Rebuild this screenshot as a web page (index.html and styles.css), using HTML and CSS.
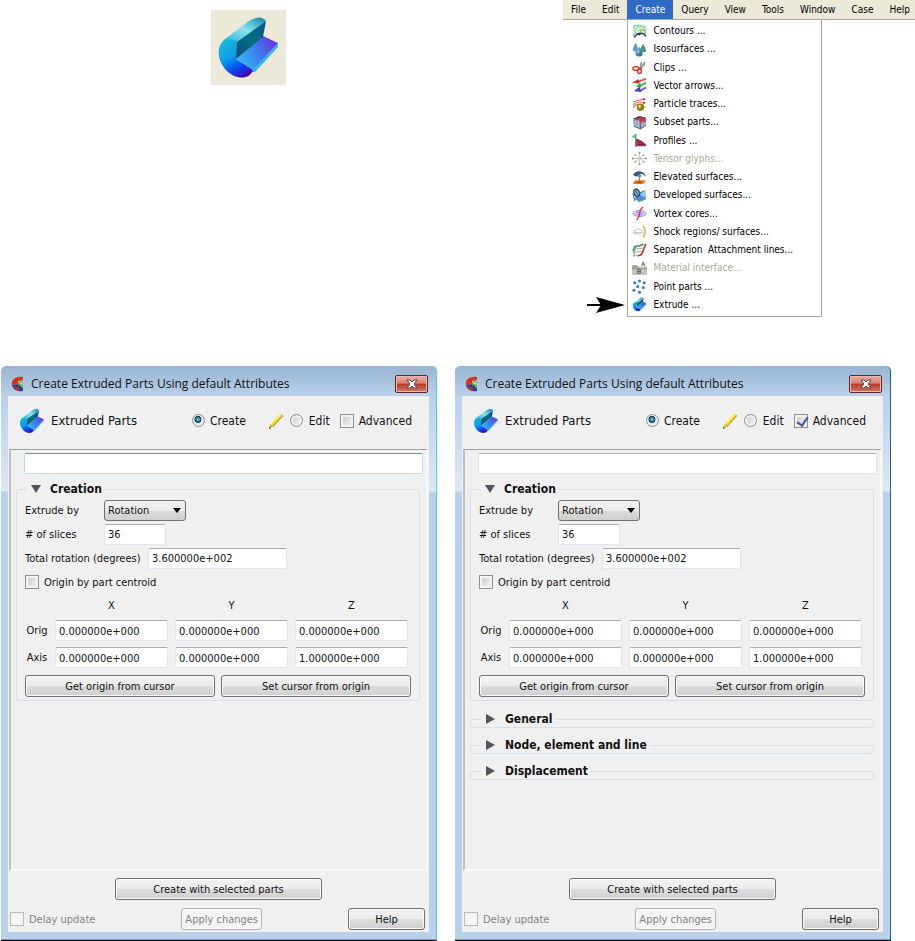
FILE: index.html
```html
<!DOCTYPE html>
<html lang="en">
<head>
  <meta charset="UTF-8">
  <title>Create Extruded Parts</title>
  <meta name="viewport" content="width=device-width, initial-scale=1.0">
  <link rel="stylesheet" href="styles.css">
</head>
<body>

  <!-- shared icons -->
  <svg class="defs" width="0" height="0" aria-hidden="true">
    <defs>
      <linearGradient id="ex-top" x1="0" y1="1" x2="1" y2="0">
        <stop offset="0" stop-color="#2cb4dc"/>
        <stop offset=".5" stop-color="#8ce4f2"/>
        <stop offset="1" stop-color="#0a86a8"/>
      </linearGradient>
      <linearGradient id="ex-wall" x1="0" y1="1" x2="1" y2="0">
        <stop offset="0" stop-color="#044a78"/>
        <stop offset=".5" stop-color="#067080"/>
        <stop offset="1" stop-color="#0a4a98"/>
      </linearGradient>
      <linearGradient id="ex-floor" x1="0" y1=".7" x2="1" y2=".3">
        <stop offset="0" stop-color="#34c0ec"/>
        <stop offset=".5" stop-color="#3a80f0"/>
        <stop offset="1" stop-color="#6a34d8"/>
      </linearGradient>
      <linearGradient id="ex-face" x1=".3" y1="0" x2=".8" y2="1">
        <stop offset="0" stop-color="#14b8dc"/>
        <stop offset=".4" stop-color="#0c9ce8"/>
        <stop offset=".7" stop-color="#0a48f4"/>
        <stop offset="1" stop-color="#4a00a8"/>
      </linearGradient>
      <linearGradient id="drop" x1="0" y1="0" x2="1" y2="1">
        <stop offset="0" stop-color="#8cc4d4"/>
        <stop offset="1" stop-color="#14608c"/>
      </linearGradient>
    </defs>
    <symbol id="icon-extrude" viewBox="0 0 75 75">
      <path d="M40 62 L44 62 L67 37 L67 33 Z" fill="#2ab8ea"/>
      <path d="M25 49 L52 26 L67 33 L42 60 Z" fill="url(#ex-floor)"/>
      <path d="M25 31 L55 11 L52 27 L25 49 Z" fill="url(#ex-wall)"/>
      <path d="M14 29 L38 11 Q50 4 55 11 L26 32 Z" fill="url(#ex-top)"/>
      <path d="M26 31 L25 49 L42 60 C39 70 24 70 15 60 C6 50 5 36 14 29 Q20 29 26 31 Z" fill="url(#ex-face)"/>
    </symbol>
    <symbol id="icon-app" viewBox="0 0 16 16">
      <path d="M13 1 C5 0 1 4 2 9 L8 8 L8 5 L13 4 Z" fill="#d8321c"/>
      <path d="M2 9 C3 14 8 16 13 15 L13 12 L8 8 Z" fill="#24448c"/>
      <path d="M3 10 C4 13 7 15 10 15 L8 11 Z" fill="#c03020"/>
      <path d="M7 8 L12 4 L13 11 Z" fill="#5cae3c"/>
      <path d="M9 7 L12 6 L12 9 Z" fill="#e8e0a0"/>
    </symbol>
    <symbol id="icon-pencil" viewBox="0 0 16 16">
      <path d="M1 16 L2 12 L12 1 L15 2 L5 13 Z" fill="#f4d40c"/>
      <path d="M5 13 L15 2 L15 3 L5 14 Z" fill="#8c7408"/>
      <path d="M3 11 L12 1 L13 2 L3 12 Z" fill="#fff06c"/>
      <path d="M1 16 L2 12 L5 13 Z" fill="#c8a868"/>
      <path d="M1 16 L1.5 14 L3 15 Z" fill="#443c20"/>
    </symbol>
    <symbol id="icon-close" viewBox="0 0 14 12">
      <path d="M2 2 H5 L7 4 L9 2 H12 L9 6 L12 10 H9 L7 8 L5 10 H2 L5 6 Z" fill="#fff" stroke="#54485c" stroke-width="1"/>
    </symbol>
  </svg>

  <div class="top">
    <div class="logo">
      <svg width="75" height="75" aria-hidden="true"><use href="#icon-extrude"/></svg>
    </div>

    <nav class="menubar">
      <a href="#">File</a>
      <a href="#">Edit</a>
      <div class="menu-open">
        <a href="#" class="active">Create</a>
        <ul class="menu">
          <li><a href="#">
            <svg viewBox="0 0 16 16"><path d="M2 2 Q8 0 14 3 L14 11 L10 9 L5 11 Q1 7 2 2Z" fill="#e4f8ea" stroke="#58c890"/><path d="M4 7 Q4 3 9 3 Q14 4 13 10 M6 8 Q7 5 10 6" fill="none" stroke="#66e05c"/><path d="M9 9 L10 6 L13 7" fill="none" stroke="#e07050"/><path d="M2 14 L7 10 L10 10 M7 12 Q11 8 15 13" fill="none" stroke="#303838" stroke-width="1.5"/><path d="M1 12 L5 10 L3 15" fill="none" stroke="#5898e0"/></svg>
            Contours ...</a></li>
          <li><a href="#">
            <svg viewBox="0 0 16 16"><path d="M4 1 Q0 7 1 9 Q3 11 6 9 Q7 6 4 1Z" fill="#5a9cc4"/><path d="M12 2 Q8 7 9 10 Q12 12 15 10 Q15 7 12 2Z" fill="#3c9c7c"/><path d="M8 5 Q2 11 4 14 Q8 17 11 14 Q12 11 8 5Z" fill="url(#drop)"/><path d="M6 10 L7 8 L8 11 L6 12Z" fill="#a4e0ec"/></svg>
            Isosurfaces ...</a></li>
          <li><a href="#">
            <svg viewBox="0 0 16 16"><path d="M10 2 L9 8 M14 2 L9 10 M12 5 L14 5" fill="none" stroke="#9a9ea2" stroke-width="2"/><path d="M7 9 L10 9" stroke="#c03020" stroke-width="2"/><ellipse cx="4" cy="9" rx="3" ry="2" fill="none" stroke="#d8402c" stroke-width="1.6"/><ellipse cx="8" cy="12" rx="2" ry="2.4" fill="none" stroke="#d8402c" stroke-width="1.6"/></svg>
            Clips ...</a></li>
          <li><a href="#">
            <svg viewBox="0 0 16 16"><path d="M15 1 L6 4" stroke="#e05858" stroke-width="2"/><path d="M0 5 L7 1 L8 6Z" fill="#c43838"/><path d="M15 5 L8 9" stroke="#38c448" stroke-width="2"/><path d="M4 9 L9 5 L10 10Z" fill="#30a840"/><path d="M15 10 L8 14" stroke="#6868d8" stroke-width="2"/><path d="M2 14 L8 9 L10 15Z" fill="#4444b8"/></svg>
            Vector arrows...</a></li>
          <li><a href="#">
            <svg viewBox="0 0 16 16"><path d="M1 5 L13 2 M1 8 Q7 4 13 6 M1 11 Q4 7 8 8" fill="none" stroke="#ec7060" stroke-width="1.2"/><path d="M12 1 L15 2 L12 4Z M12 5 L15 6 L12 8Z" fill="#d82020"/><circle cx="9" cy="11" r="4" fill="#8c8414"/><circle cx="8" cy="10" r="1.5" fill="#e8dc74"/><path d="M13 12 L15 10" stroke="#ec7060"/></svg>
            Particle traces...</a></li>
          <li><a href="#">
            <svg viewBox="0 0 16 16"><path d="M1 4 L8 1 L15 3 L15 11 L9 15 L2 12Z" fill="#8c9cb4"/><path d="M1 4 L8 1 L15 3 L9 6Z" fill="#4c4458"/><path d="M5 4 L10 2 L15 4 L14 8 L9 9 L8 6Z" fill="#d42c3c"/><path d="M2 7 L9 9 L15 7 M2 10 L9 12 L15 9 M4 5 L4 13 M7 5 L7 14 M11 6 L11 13" fill="none" stroke="#d8e0ec" stroke-width=".5"/><path d="M9 6 L9 15 M2 12 L9 15 L15 11" fill="none" stroke="#586478"/></svg>
            Subset parts...</a></li>
          <li><a href="#">
            <svg viewBox="0 0 16 16"><path d="M4 6 Q9 6 15 12 L15 14 L4 14Z" fill="#a83c48"/><path d="M6 9 L12 12 M6 12 L14 13" stroke="#6c2430"/><path d="M4 1 V15" stroke="#5c5cc4" stroke-width="1.2"/><path d="M4 1 L0 4 L4 6Z" fill="#2cd43c"/></svg>
            Profiles ...</a></li>
          <li class="disabled"><a href="#">
            <svg viewBox="0 0 16 16"><path d="M8 1 V15 M1 8 H15 M3 4 L13 12 M13 4 L3 12" stroke="#c4c4bc"/><path d="M7 2 H9 M7 14 H9 M1 7 V9 M15 7 V9 M3 5 L4 4 M12 4 L13 5 M3 11 L4 12 M12 12 L13 11" stroke="#9c9c94" stroke-width="2"/></svg>
            Tensor glyphs...</a></li>
          <li><a href="#">
            <svg viewBox="0 0 16 16"><path d="M3 11 L15 11 L12 15 L1 15Z" fill="#e87820"/><path d="M3 13 L10 12 L9 14Z" fill="#c43c10"/><path d="M1 5 Q5 0 11 2 Q14 3 15 7 L11 4 Q6 4 4 7Z" fill="#2c5898"/><path d="M2 5 L9 4 L5 7Z" fill="#485060"/><path d="M8 5 V12 M6 7 L8 5 L10 7" fill="none" stroke="#788088" stroke-width="1.5"/></svg>
            Elevated surfaces...</a></li>
          <li><a href="#">
            <svg viewBox="0 0 16 16"><path d="M4 6 L14 2 L15 12 L8 15 L3 12Z" fill="#4c90d0"/><path d="M8 7 L14 3 L15 11Z" fill="#9cc8ec"/><ellipse cx="5" cy="5" rx="3" ry="4" transform="rotate(-25 5 5)" fill="#84acc8" stroke="#284460" stroke-width="1.3"/><path d="M1 6 L3 14 M3 2 L7 8" stroke="#304c68"/></svg>
            Developed surfaces...</a></li>
          <li><a href="#">
            <svg viewBox="0 0 16 16"><ellipse cx="8" cy="8" rx="7" ry="3.2" fill="#dcd8fc" stroke="#9088f0"/><ellipse cx="8" cy="8" rx="3.5" ry="1.5" fill="none" stroke="#8078e8"/><path d="M12 1 Q8 4 8 8 Q8 12 5 15" fill="none" stroke="#e03038" stroke-width="1.4"/></svg>
            Vortex cores...</a></li>
          <li><a href="#">
            <svg viewBox="0 0 16 16"><path d="M1 8 L7 5 L12 8 M1 9 H12 M2 10 L10 11" fill="none" stroke="#c0c0c4"/><path d="M12 2 Q16 8 12 14" fill="none" stroke="#f4a040" stroke-width="1.5"/></svg>
            Shock regions/ surfaces...</a></li>
          <li><a href="#">
            <svg viewBox="0 0 16 16"><path d="M1 4 L14 2 M1 7 L14 5 M1 10 L13 9 M1 13 L11 13 M4 2 L2 15" fill="none" stroke="#909890" stroke-width=".9"/><path d="M1 9 Q2 3 8 3 Q10 2 12 1" fill="none" stroke="#28a838" stroke-width="1.5"/><path d="M15 1 Q13 5 12 8 Q11 13 6 14" fill="none" stroke="#c42c38" stroke-width="1.6"/></svg>
            Separation&nbsp; Attachment lines...</a></li>
          <li class="disabled"><a href="#">
            <svg viewBox="0 0 16 16"><path d="M0 5 Q4 3 7 6 Q10 8 16 6 V15 H0Z" fill="#c4c4bc"/><path d="M0 5 Q4 3 7 6 Q10 8 16 6 L16 9 H0Z" fill="#a4a49c"/><path d="M10 6 L12 1 L14 6 M11 4 H13" fill="none" stroke="#6c6c68"/><path d="M6 9 H9 V13 H6Z M6 11 H9" fill="none" stroke="#64645e"/></svg>
            Material interface...</a></li>
          <li><a href="#">
            <svg viewBox="0 0 16 16" fill="#347cc4"><circle cx="3" cy="4" r="1.6"/><circle cx="8" cy="2" r="1.6"/><circle cx="13" cy="4" r="1.6"/><circle cx="6" cy="8" r="1.6"/><circle cx="12" cy="9" r="1.6"/><circle cx="2" cy="12" r="1.6"/><circle cx="8" cy="14" r="1.6"/></svg>
            Point parts ...</a></li>
          <li><a href="#">
            <svg viewBox="5 5 64 66"><use href="#icon-extrude" width="75" height="75"/></svg>
            Extrude ...</a>
            <svg class="pointer" viewBox="0 0 38 18"><path d="M0 9 H14" stroke="#000" stroke-width="2"/><path d="M9 1 L38 9 L9 17 L14 9Z" fill="#000"/></svg>
          </li>
        </ul>
      </div>
      <a href="#">Query</a>
      <a href="#">View</a>
      <a href="#">Tools</a>
      <a href="#">Window</a>
      <a href="#">Case</a>
      <a href="#">Help</a>
    </nav>
  </div>

  <main class="dialogs">

    <form class="dialog">
      <div class="titlebar">
        <svg width="16" height="16" aria-hidden="true"><use href="#icon-app"/></svg>
        <h2>Create Extruded Parts Using default Attributes</h2>
        <button type="button" class="close" aria-label="Close"><svg width="14" height="12"><use href="#icon-close"/></svg></button>
      </div>
      <div class="client">
        <div class="mode">
          <svg width="30" height="30" aria-hidden="true"><use href="#icon-extrude"/></svg>
          <h3>Extruded Parts</h3>
          <label class="mode-create"><input type="radio" name="mode" checked> Create</label>
          <label class="mode-edit"><svg width="16" height="16" aria-hidden="true"><use href="#icon-pencil"/></svg><input type="radio" name="mode"> Edit</label>
          <label><input type="checkbox"> Advanced</label>
        </div>

        <div class="panel">
          <input type="text" class="description focused" aria-label="Description">

          <fieldset>
            <legend><button type="button" class="toggle open">Creation</button></legend>
            <div class="row">
              <label for="by1" class="short">Extrude by</label>
              <span class="dropdown"><select id="by1"><option>Rotation</option><option>Translation</option></select></span>
            </div>
            <div class="row">
              <label for="slices1" class="short"># of slices</label>
              <input type="text" id="slices1" class="small" value="36">
            </div>
            <div class="row">
              <label for="rot1" class="long">Total rotation (degrees)</label>
              <input type="text" id="rot1" class="medium" value="3.600000e+002">
            </div>
            <div class="row">
              <label><input type="checkbox"> Origin by part centroid</label>
            </div>
            <table>
              <tr><td></td><th>X</th><th>Y</th><th>Z</th></tr>
              <tr>
                <th>Orig</th>
                <td><input type="text" aria-label="Orig X" value="0.000000e+000"></td>
                <td><input type="text" aria-label="Orig Y" value="0.000000e+000"></td>
                <td><input type="text" aria-label="Orig Z" value="0.000000e+000"></td>
              </tr>
              <tr>
                <th>Axis</th>
                <td><input type="text" aria-label="Axis X" value="0.000000e+000"></td>
                <td><input type="text" aria-label="Axis Y" value="0.000000e+000"></td>
                <td><input type="text" aria-label="Axis Z" value="1.000000e+000"></td>
              </tr>
            </table>
            <div class="cursor-buttons">
              <button type="button" class="btn">Get origin from cursor</button>
              <button type="button" class="btn">Set cursor from origin</button>
            </div>
          </fieldset>
        </div>

        <button type="button" class="btn create">Create with selected parts</button>
        <div class="bottom">
          <label class="disabled"><input type="checkbox" disabled> Delay update</label>
          <button type="button" class="btn" disabled>Apply changes</button>
          <button type="button" class="btn help">Help</button>
        </div>
      </div>
    </form>

    <form class="dialog">
      <div class="titlebar">
        <svg width="16" height="16" aria-hidden="true"><use href="#icon-app"/></svg>
        <h2>Create Extruded Parts Using default Attributes</h2>
        <button type="button" class="close" aria-label="Close"><svg width="14" height="12"><use href="#icon-close"/></svg></button>
      </div>
      <div class="client">
        <div class="mode">
          <svg width="30" height="30" aria-hidden="true"><use href="#icon-extrude"/></svg>
          <h3>Extruded Parts</h3>
          <label class="mode-create"><input type="radio" name="mode" checked> Create</label>
          <label class="mode-edit"><svg width="16" height="16" aria-hidden="true"><use href="#icon-pencil"/></svg><input type="radio" name="mode"> Edit</label>
          <label><input type="checkbox" checked> Advanced</label>
        </div>

        <div class="panel">
          <input type="text" class="description" aria-label="Description">

          <fieldset>
            <legend><button type="button" class="toggle open">Creation</button></legend>
            <div class="row">
              <label for="by2" class="short">Extrude by</label>
              <span class="dropdown"><select id="by2"><option>Rotation</option><option>Translation</option></select></span>
            </div>
            <div class="row">
              <label for="slices2" class="short"># of slices</label>
              <input type="text" id="slices2" class="small" value="36">
            </div>
            <div class="row">
              <label for="rot2" class="long">Total rotation (degrees)</label>
              <input type="text" id="rot2" class="medium" value="3.600000e+002">
            </div>
            <div class="row">
              <label><input type="checkbox"> Origin by part centroid</label>
            </div>
            <table>
              <tr><td></td><th>X</th><th>Y</th><th>Z</th></tr>
              <tr>
                <th>Orig</th>
                <td><input type="text" aria-label="Orig X" value="0.000000e+000"></td>
                <td><input type="text" aria-label="Orig Y" value="0.000000e+000"></td>
                <td><input type="text" aria-label="Orig Z" value="0.000000e+000"></td>
              </tr>
              <tr>
                <th>Axis</th>
                <td><input type="text" aria-label="Axis X" value="0.000000e+000"></td>
                <td><input type="text" aria-label="Axis Y" value="0.000000e+000"></td>
                <td><input type="text" aria-label="Axis Z" value="1.000000e+000"></td>
              </tr>
            </table>
            <div class="cursor-buttons">
              <button type="button" class="btn">Get origin from cursor</button>
              <button type="button" class="btn">Set cursor from origin</button>
            </div>
          </fieldset>

          <fieldset class="collapsed"><legend><button type="button" class="toggle">General</button></legend></fieldset>
          <fieldset class="collapsed"><legend><button type="button" class="toggle">Node, element and line</button></legend></fieldset>
          <fieldset class="collapsed"><legend><button type="button" class="toggle">Displacement</button></legend></fieldset>
        </div>

        <button type="button" class="btn create">Create with selected parts</button>
        <div class="bottom">
          <label class="disabled"><input type="checkbox" disabled> Delay update</label>
          <button type="button" class="btn" disabled>Apply changes</button>
          <button type="button" class="btn help">Help</button>
        </div>
      </div>
    </form>

  </main>

</body>
</html>
```
FILE: styles.css
```css
* {
  box-sizing: border-box;
}

body {
  margin: 0;
  background: #fff;
  color: #111;
  font-family: "DejaVu Sans Condensed", "DejaVu Sans", sans-serif;
  font-size: 11px;
}

.defs {
  position: absolute;
}

a {
  color: inherit;
  text-decoration: none;
}

input,
select,
button {
  font: inherit;
  color: inherit;
}

/* top: logo and menu */

.top {
  display: flex;
  justify-content: space-between;
  align-items: flex-start;
  min-height: 366px;
  padding-left: 211px;
}

.logo {
  margin-top: 10px;
  height: 75px;
  background: #ece9d8;
}

.menubar {
  display: flex;
  width: 352px;
  height: 20px;
  background: #ece9d8;
  border-bottom: 1px solid #aca899;
  font-size: 10px;
  line-height: 19px;
  color: #000;
}

.menubar > a,
.menubar .active {
  display: block;
  padding: 0 8px;
}

.menubar .active {
  background: #316ac5;
  color: #fff;
}

.menu-open {
  position: relative;
}

.menu {
  position: absolute;
  top: 19px;
  left: 0;
  display: grid;
  grid-auto-rows: 1fr;
  width: 195px;
  min-height: 298px;
  margin: 0;
  padding: 2px 0 2px 4px;
  list-style: none;
  background: #fff;
  border: 1px solid #aca899;
}

.menu li {
  position: relative;
}

.menu li a {
  display: flex;
  align-items: center;
  gap: 6px;
  height: 100%;
  line-height: 16px;
}

.menu li a svg {
  width: 15px;
  height: 15px;
}

.menu .disabled {
  color: #aca899;
}

.pointer {
  position: absolute;
  top: 0;
  right: 100%;
  width: 38px;
  height: 18px;
  margin-right: 7px;
}

/* dialogs */

.dialogs {
  display: flex;
  gap: 18px;
  padding: 0 24px 0 1px;
}

.dialog {
  flex: 1;
  display: flex;
  flex-direction: column;
  min-height: 575px;
  padding: 0 7px 8px;
  background: linear-gradient(#98b4d2, #b9d1ea 30px, #dce8f5 125px, #b9d1ea 126px);
  border-right: 1px solid #54cce0;
  border-bottom: 1px solid #000;
  border-radius: 5px 5px 0 0;
  box-shadow: inset 0 -1px #34c0d8;
}

.dialog + .dialog {
  border-right-color: #1c6c80;
}

.titlebar {
  display: flex;
  align-items: center;
  gap: 5px;
  height: 30px;
  padding: 6px 1px 0 2px;
}

.titlebar h2 {
  flex: 1;
  margin: 0;
  font: 12px/18px "Open Sans", sans-serif;
}

.close {
  display: flex;
  align-items: center;
  justify-content: center;
  width: 33px;
  height: 18px;
  padding: 0;
  border: 1px solid #5c2834;
  border-radius: 2px;
  background: linear-gradient(#e8aca0, #d88474 45%, #b83c28 50%, #d07864);
  box-shadow: inset 0 0 0 1px #ecb8ac;
}

.client {
  flex: 1;
  display: flex;
  flex-direction: column;
  padding: 0 1px 2px;
  background: #f0f0f0;
}

.mode {
  display: flex;
  align-items: center;
  height: 53px;
  padding: 0 16px 4px 8px;
  font-size: 12px;
}

.mode h3 {
  flex: 1;
  margin: 0 0 0 4px;
  font-size: 13px;
  font-weight: normal;
}

label {
  display: flex;
  align-items: center;
  gap: 5px;
  white-space: nowrap;
}

.mode-create {
  margin-right: 22px;
}

.mode-edit {
  gap: 6px;
  margin-right: 10px;
}

input[type="radio"],
input[type="checkbox"] {
  appearance: none;
  flex: none;
  width: 14px;
  height: 14px;
  margin: 0;
  border: 1px solid #8e8f8f;
  background: linear-gradient(135deg, #c4c8cc, #f6f6f6);
  box-shadow: inset 0 0 0 2px #f4f4f4;
}

input[type="radio"] {
  width: 13px;
  height: 13px;
  border-radius: 50%;
}

input[type="radio"]:checked {
  background: radial-gradient(circle at 45% 40%, #8cdcf4 0, #246890 25%, #12304c 36%, #e8eaec 42%);
  box-shadow: none;
}

input[type="checkbox"]:checked::after {
  content: "";
  display: block;
  width: 5px;
  height: 9px;
  margin: 0 0 0 4px;
  border: solid #44569c;
  border-width: 0 2px 2px 0;
  transform: rotate(35deg);
}

input:disabled {
  border-color: #bcbcbc;
  background: #f8f8f8;
}

.panel {
  flex: 1;
  padding: 3px 3px 0 5px;
  border-top: 1px solid #a0a0a0;
  border-left: 2px solid #c0c0c0;
  border-right: 2px solid #f8f8f8;
  border-bottom: 2px solid #fafafa;
}

input[type="text"] {
  display: block;
  height: 21px;
  padding: 1px 3px 0;
  background: #fff;
  border: 1px solid #e3e5ec;
  border-top-color: #abadb3;
  border-radius: 2px;
  outline: none;
}

input.description {
  width: calc(100% - 8px);
  margin-left: 8px;
}

input[type="text"].focused {
  border-color: #b8dcf0;
  border-top-color: #5c98c8;
}

fieldset {
  min-width: 0;
  margin: 7px 3px 0 0;
  padding: 1px 8px 3px;
  border: 1px solid #d5dfe5;
  border-radius: 3px;
}

legend {
  margin-left: 2px;
  padding: 0 3px 0 1px;
  line-height: 16px;
}

.toggle {
  display: flex;
  align-items: center;
  gap: 9px;
  height: 16px;
  padding: 0 0 0 3px;
  border: 0;
  background: none;
  font-weight: bold;
  font-size: 12px;
}

.toggle::before {
  content: "";
  border: solid transparent;
  border-width: 5px 0 5px 9px;
  border-left-color: #50545c;
  margin: 0 1px;
}

.toggle.open::before {
  border-color: #50545c transparent transparent;
  border-width: 8px 5px 0;
  margin: 0;
}

.collapsed {
  margin-top: 10px;
  padding: 0 8px;
}

.collapsed + .collapsed {
  margin-top: 9px;
}

.row {
  display: flex;
  align-items: center;
  gap: 5px;
  height: 24px;
}

.short {
  width: 74px;
}

.long {
  width: 118px;
}

.small {
  width: 62px;
}

.medium {
  width: 139px;
}

.dropdown {
  position: relative;
}

.dropdown select {
  appearance: none;
  display: block;
  width: 82px;
  height: 21px;
  padding: 0 3px;
  border: 1px solid #707070;
  border-radius: 3px;
  background: linear-gradient(#f2f2f2, #ebebeb 50%, #dcdcdc 51%, #cfcfcf);
}

.dropdown::after {
  content: "";
  position: absolute;
  top: 8px;
  right: 5px;
  border: solid transparent;
  border-width: 5px 4px 0;
  border-top-color: #000;
  pointer-events: none;
}

table {
  width: 100%;
  border-collapse: collapse;
}

th,
td {
  width: 120px;
  height: 27px;
  padding: 0 7px 0 0;
  font-weight: normal;
}

th:first-child,
td:first-child {
  width: 30px;
  padding: 0;
}

th:first-child {
  padding-right: 6px;
}

th:last-child,
td:last-child {
  width: 116px;
  padding-right: 3px;
}

td input[type="text"] {
  width: 100%;
}

tr:first-child th,
tr:first-child td {
  height: 23px;
}

.cursor-buttons {
  display: flex;
  gap: 6px;
  margin-top: 4px;
}

.cursor-buttons .btn {
  flex: 1;
}

.btn {
  height: 22px;
  padding: 0 3px;
  border: 1px solid #707070;
  border-radius: 3px;
  background: linear-gradient(#f2f2f2, #ebebeb 50%, #dddddd 51%, #cfcfcf);
  box-shadow: inset 0 0 0 1px #fafafa;
}

.btn:disabled {
  color: #838383;
  border-color: #adb2b5;
  background: #f4f4f4;
}

.create {
  align-self: center;
  width: 207px;
  margin: 7px 0 8px;
}

.bottom {
  display: flex;
  align-items: center;
  justify-content: space-between;
  padding: 0 3px 0 1px;
}

.bottom .disabled {
  color: #838383;
}

.help {
  width: 77px;
}
```
